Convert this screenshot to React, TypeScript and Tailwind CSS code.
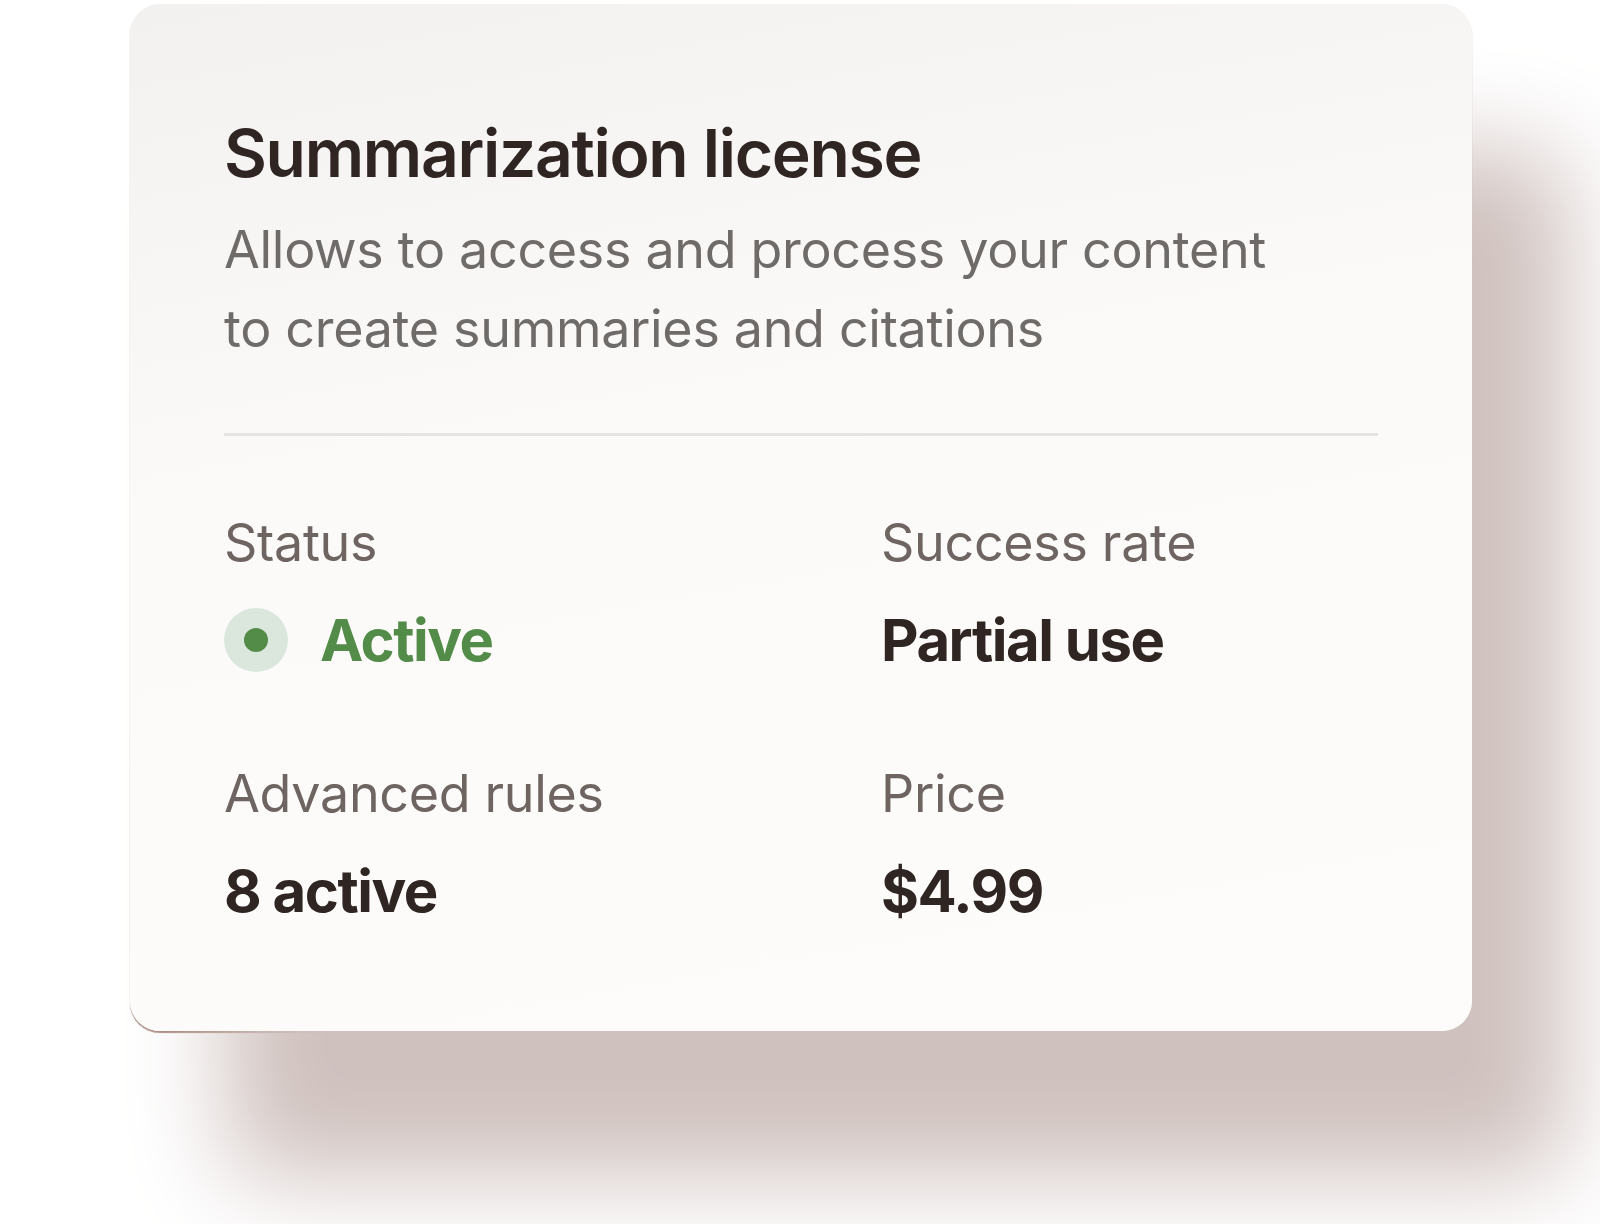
import React from 'react';

interface Field {
  label: string;
  value: string;
  status?: boolean;
}

const FIELDS: Field[] = [
  { label: 'Status', value: 'Active', status: true },
  { label: 'Success rate', value: 'Partial use' },
  { label: 'Advanced rules', value: '8 active' },
  { label: 'Price', value: '$4.99' },
];

const App: React.FC = () => {
  return (
    <div className="min-h-[1224px] w-[1600px] overflow-hidden bg-white font-['Inter','Liberation_Sans',sans-serif]">
      <div className="ml-[130px] mt-[4px] w-[1342px] rounded-[30px] bg-[linear-gradient(170deg,#f3f1f0_0%,#fbfaf9_40%,#fdfcfb_100%)] px-[94px] pt-[109px] pb-[108px] shadow-[96px_146px_100px_0_#cfc1be,0_2px_1px_0_rgba(150,110,100,0.8)]">
        <h1 className="text-[66px] leading-[80px] font-semibold tracking-[-0.02em] text-[#2f2522]">
          Summarization license
        </h1>
        <p className="mt-[17px] text-[52px] leading-[79px] tracking-[-0.006em] text-[#6f6b69]">
          Allows to access and process your content
          <br />
          to create summaries and citations
        </p>

        <div className="mt-[65px] h-[3px] bg-[#e6e4e3]" />

        {/* Details */}
        <div className="mt-[75px] grid grid-cols-[657px_1fr] gap-y-[90px]">
          {FIELDS.map((f) => (
            <div key={f.label} className="flex flex-col">
              <span className="text-[52px] leading-[63px] tracking-[-0.006em] text-[#6e6462]">{f.label}</span>
              <div className="mt-[34px] flex h-16 items-center gap-8">
                {f.status && (
                  <span className="flex h-16 w-16 items-center justify-center rounded-full bg-[#dbe6dc]">
                    <span className="h-6 w-6 rounded-full bg-[#528c48]" />
                  </span>
                )}
                <span
                  className={`text-[58px] leading-[64px] font-bold tracking-[-0.025em] ${
                    f.status ? 'text-[#528c48]' : 'text-[#2f2522]'
                  }`}
                >
                  {f.value}
                </span>
              </div>
            </div>
          ))}
        </div>
      </div>
    </div>
  );
};

export default App;
